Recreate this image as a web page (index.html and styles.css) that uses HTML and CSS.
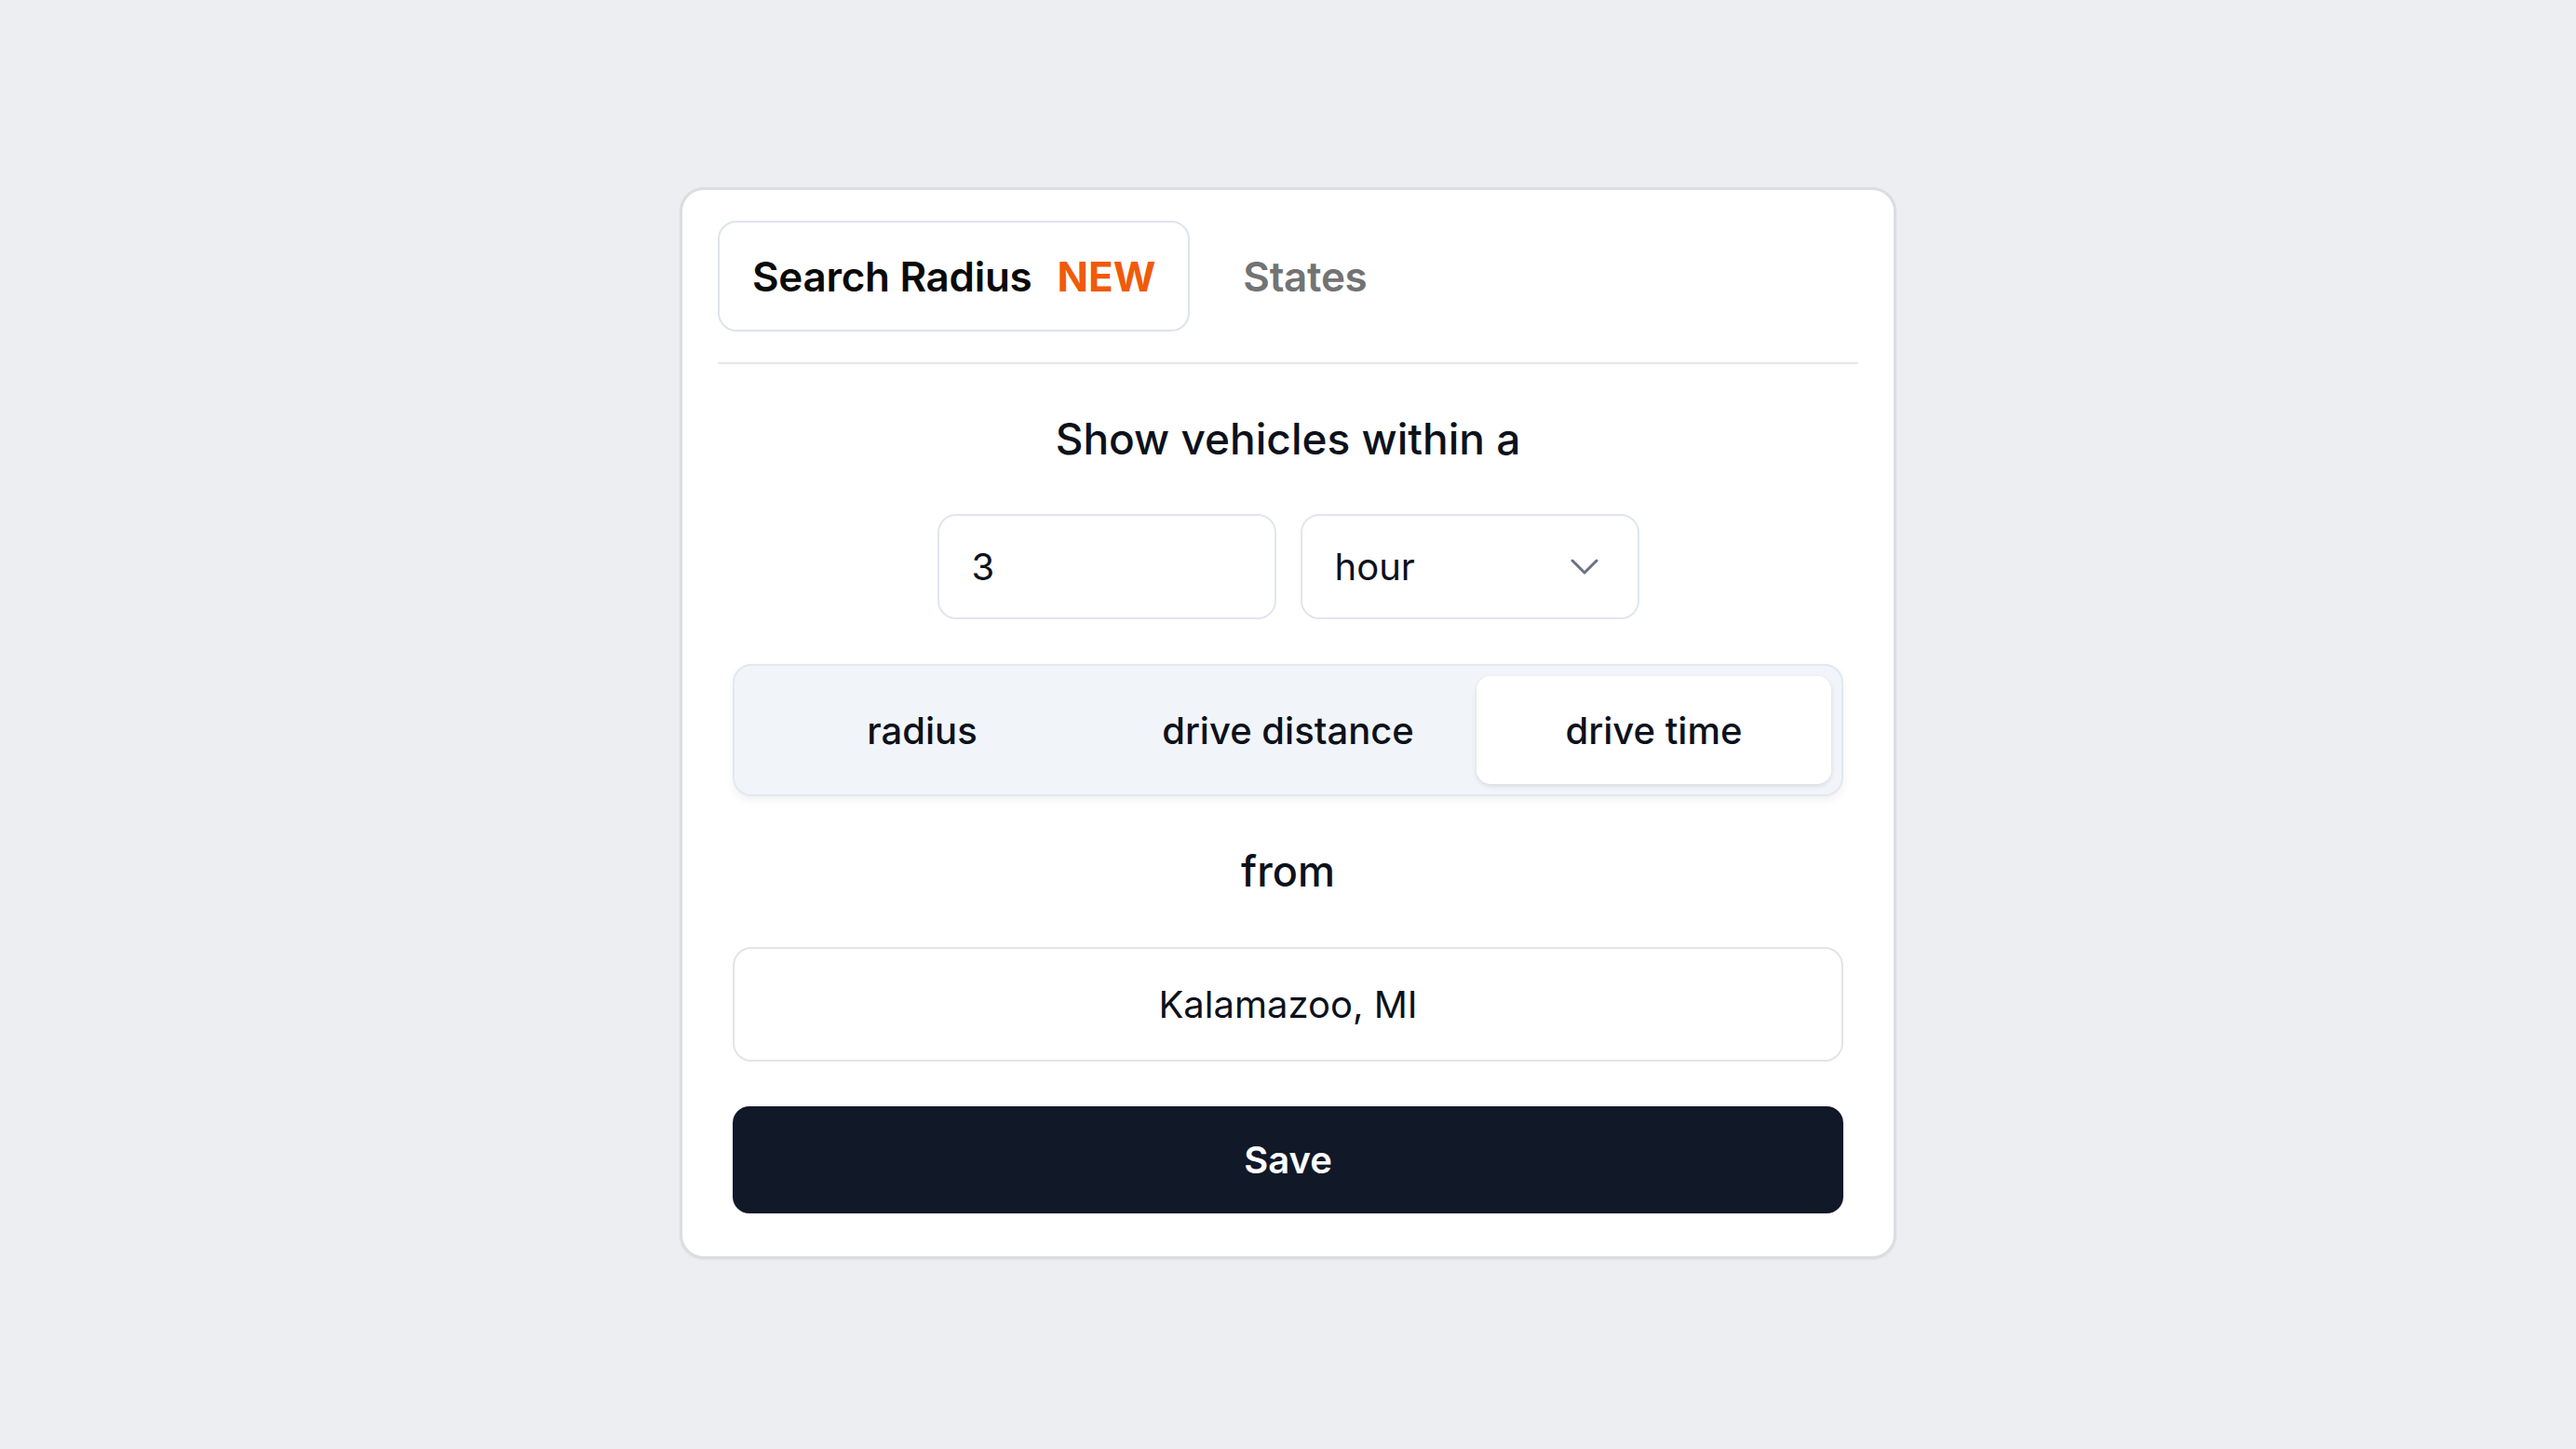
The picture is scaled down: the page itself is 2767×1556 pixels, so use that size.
FILE: index.html
```html
<!DOCTYPE html>
<html lang="en">
<head>
<meta charset="utf-8">
<title>Search Radius</title>
<link rel="stylesheet" href="styles.css">
</head>
<body>
<div class="card">
  <div class="tabs">
    <div class="tab tab-active"><span>Search Radius</span><span class="badge-new">NEW</span></div>
    <div class="tab tab-muted"><span>States</span></div>
  </div>
  <div class="panel">
    <div class="heading">Show vehicles within a</div>
    <div class="inputs">
      <div class="field">3</div>
      <div class="field select">
        <span>hour</span>
        <svg class="chevron" width="30" height="17" viewBox="0 0 30 17" fill="none"><polyline points="2,2 15,15 28,2" stroke="#6b7280" stroke-width="3" stroke-linecap="round" stroke-linejoin="round"/></svg>
      </div>
    </div>
    <div class="segmented">
      <div class="seg">radius</div>
      <div class="seg">drive distance</div>
      <div class="seg seg-active">drive time</div>
    </div>
    <div class="heading heading-from">from</div>
    <div class="location">Kalamazoo, MI</div>
    <div class="save">Save</div>
  </div>
</div>
</body>
</html>
```

FILE: styles.css
```css
* { box-sizing: border-box; }
html, body { margin: 0; padding: 0; }
body {
  background: #edeef2;
  font-family: Inter, "Noto Sans", sans-serif;
  color: #0d111b;
  min-height: 100vh;
  display: flex;
  align-items: flex-start;
  justify-content: center;
  padding-top: 201px;
}
.card {
  width: 1307px;
  background: #ffffff;
  border: 3px solid #dcdde2;
  border-radius: 26px;
  padding: 33px 38px 46px;
  box-shadow: 0 1px 2px rgba(0,0,0,0.05);
}
.tabs {
  display: flex;
  gap: 20px;
  padding-bottom: 33px;
  border-bottom: 2px solid #e6e7eb;
}
.tab {
  height: 119px;
  padding: 0 35px;
  border: 2.5px solid transparent;
  border-radius: 20px;
  display: flex;
  align-items: center;
  gap: 27px;
  font-size: 44px;
  font-weight: 600;
  letter-spacing: -0.3px;
}
.tab-active { border-color: #dde4ee; color: #0a0a0a; }
.tab-muted { color: #737373; }
.badge-new { color: #f05a0a; font-weight: 700; letter-spacing: 0; }
.panel {
  padding: 48px 16px 0;
  display: flex;
  flex-direction: column;
  gap: 48px;
}
.heading {
  text-align: center;
  font-size: 46px;
  font-weight: 500;
  line-height: 65px;
}
.heading-from { font-size: 45px; line-height: 66px; }
.inputs {
  display: flex;
  justify-content: center;
  gap: 26px;
}
.field {
  width: 364px;
  height: 113px;
  border: 2.5px solid #e0e6ef;
  border-radius: 20px;
  padding: 0 35px;
  display: flex;
  align-items: center;
  font-size: 40px;
  font-weight: 400;
}
.select { justify-content: space-between; padding-right: 42px; }
.chevron { display: block; }
.segmented {
  height: 142px;
  border: 2px solid #e2e8f0;
  background: #f1f5f9;
  border-radius: 20px;
  padding: 11px;
  display: grid;
  grid-template-columns: repeat(3, 1fr);
  gap: 12px;
  box-shadow: 0 4px 10px rgba(15, 23, 42, 0.06);
}
.seg {
  display: flex;
  align-items: center;
  justify-content: center;
  font-size: 40px;
  font-weight: 500;
  border-radius: 15px;
}
.seg-active {
  background: #ffffff;
  box-shadow: 0 2px 5px rgba(15, 23, 42, 0.12);
}
.location {
  height: 123px;
  border: 2.5px solid #e3e4e8;
  border-radius: 20px;
  display: flex;
  align-items: center;
  justify-content: center;
  font-size: 40px;
  font-weight: 400;
}
.save {
  height: 115px;
  background: #111828;
  color: #ffffff;
  border-radius: 18px;
  display: flex;
  align-items: center;
  justify-content: center;
  font-size: 40px;
  font-weight: 600;
}
```
